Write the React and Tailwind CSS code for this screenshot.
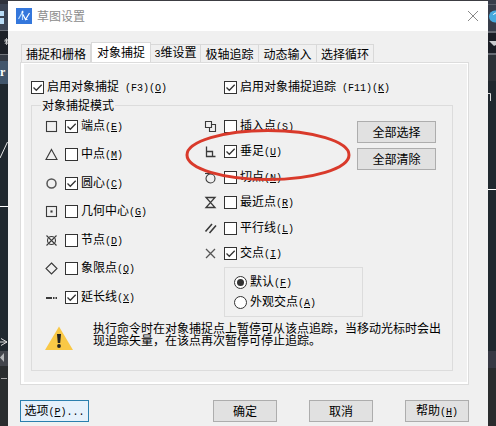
import React, { useState } from 'react';

const TABS = ['捕捉和栅格', '对象捕捉', '3维设置', '极轴追踪', '动态输入', '选择循环'];

const TAB_WIDTHS = ['w-[70px]', 'w-[60px]', 'w-[50px]', 'w-[58px]', 'w-[58px]', 'w-[57px]'];

const LEFT_MODES = [
  { id: 'end', name: '端点', hotkey: 'E', on: true },
  { id: 'mid', name: '中点', hotkey: 'M' },
  { id: 'center', name: '圆心', hotkey: 'C', on: true },
  { id: 'geo', name: '几何中心', hotkey: 'G' },
  { id: 'node', name: '节点', hotkey: 'D' },
  { id: 'quadrant', name: '象限点', hotkey: 'Q' },
  { id: 'extension', name: '延长线', hotkey: 'X', on: true },
];

const RIGHT_MODES = [
  { id: 'insert', name: '插入点', hotkey: 'S' },
  { id: 'perp', name: '垂足', hotkey: 'U', on: true },
  { id: 'tangent', name: '切点', hotkey: 'N' },
  { id: 'nearest', name: '最近点', hotkey: 'R' },
  { id: 'parallel', name: '平行线', hotkey: 'L' },
  { id: 'intersect', name: '交点', hotkey: 'I', on: true },
];

// 13x13 snap markers
const MARKERS = {
  end: <rect x="1.5" y="1.5" width="10" height="10" />,
  mid: <path d="M6.5 1.5 L12 11.5 H1 Z" />,
  center: <circle cx="6.5" cy="6.5" r="4.5" strokeWidth="1.5" stroke="#555" />,
  geo: (
    <>
      <rect x="1.5" y="1.5" width="10" height="10" />
      <rect x="6" y="6" width="1" height="1" />
    </>
  ),
  node: (
    <>
      <circle cx="6.5" cy="6.5" r="4" />
      <path d="M1.5 1.5 L11.5 11.5 M11.5 1.5 L1.5 11.5" />
    </>
  ),
  quadrant: <path d="M6.5 1 L12 6.5 L6.5 12 L1 6.5 Z" />,
  extension: <path d="M1 7 H7 M8 7 H9.5 M10.5 7 H12" strokeWidth="2" />,
  insert: <path d="M1.5 1.5 H7.5 V4.5 H11.5 V11.5 H5.5 V7.5 H1.5 Z M7.5 4.5 V7.5 H5.5" />,
  perp: <path d="M2.5 1.5 V11.5 H11.5 M2.5 6.5 H8.5 V11.5" strokeWidth="1.3" />,
  tangent: (
    <>
      <path d="M1 2.5 H12" />
      <circle cx="6.5" cy="7.5" r="4.5" />
    </>
  ),
  nearest: <path d="M2 1.5 H11 L2 11.5 H11 Z" strokeWidth="1.3" />,
  parallel: <path d="M1.5 9.5 L8 2 M5.5 11 L12 3.5" strokeWidth="1.6" />,
  intersect: <path d="M2 2 L11 11 M11 2 L2 11" strokeWidth="1.3" stroke="#555" />,
};

function Marker({ id }) {
  return (
    <svg className="size-[13px] shrink-0" viewBox="0 0 13 13" fill="none" stroke="#3a3a3a" strokeWidth="1.1" aria-hidden="true">
      {MARKERS[id]}
    </svg>
  );
}

// Latin part of a caption, half the width of the Chinese glyphs
function Half({ children }) {
  return <span className="font-['Liberation_Mono',monospace] text-[10px] whitespace-pre">{children}</span>;
}

function Hotkey({ char }) {
  return (
    <Half>
      (<u className="underline-offset-1">{char}</u>)
    </Half>
  );
}

function CheckBox({ checked, onChange, children }) {
  return (
    <label className="flex h-5 items-center gap-[3px] whitespace-nowrap">
      <span className="grid shrink-0">
        <input
          type="checkbox"
          checked={checked}
          onChange={onChange}
          className="peer col-start-1 row-start-1 size-[13px] appearance-none border border-[#333] bg-white"
        />
        <svg
          className="pointer-events-none invisible col-start-1 row-start-1 size-[13px] peer-checked:visible"
          viewBox="0 0 13 13"
          fill="none"
          stroke="#333"
          strokeWidth="1.3"
        >
          <path d="M2.5 6.5 L5.3 9.3 L10.7 3.7" />
        </svg>
      </span>
      <span>{children}</span>
    </label>
  );
}

function Radio({ checked, onChange, children }) {
  return (
    <label className="flex h-5 items-center gap-[3px] whitespace-nowrap">
      <input
        type="radio"
        name="intersection"
        checked={checked}
        onChange={onChange}
        className="grid size-[13px] shrink-0 appearance-none place-content-center rounded-full border border-[#333] bg-white before:size-[7px] before:rounded-full checked:before:bg-[#333]"
      />
      <span>{children}</span>
    </label>
  );
}

function Button({ className, children }) {
  return (
    <button
      type="button"
      className={`flex h-[22px] items-center justify-center border whitespace-nowrap ${className}`}
    >
      <span>{children}</span>
    </button>
  );
}

const GREY = 'border-[#adadad] bg-[#e1e1e1]';

function CanvasLeft() {
  return (
    <svg className="w-2 h-[426px] shrink-0" viewBox="0 0 8 426" aria-hidden="true">
      <rect width="8" height="30" fill="#3b4454" />
      <rect width="8" height="4" fill="#2f333d" />
      <path d="M0 11 H4 V16 H0 Z M0 18 H4 V24 H0 Z" fill="#b9dcf6" />
      <rect y="30" width="8" height="1" fill="#6a6f78" />
      <rect y="31" width="8" height="23" fill="#1c2027" />
      <path d="M4 41 H8 M6.5 38 V45 M5 39 L8 44 M5 44 L8 39" stroke="#ddd" strokeWidth="0.8" />
      <rect y="54" width="8" height="1" fill="#71757c" />
      <rect y="55" width="8" height="6" fill="#343a44" />
      <rect y="61" width="8" height="23" fill="#42566c" />
      <text x="0" y="76" fill="#fff" fontSize="12" fontWeight="bold" fontFamily="Liberation Serif, serif">r</text>
      <path d="M0 158 L7.5 142" stroke="#e5e5e5" />
      <path d="M0 206.5 H8" stroke="#fff" />
      <path d="M1 338.5 L7 342 L1 345.5 M0 342 H7" stroke="#ddd" fill="none" />
      <rect y="351" width="8" height="15" fill="#42454c" />
      <path d="M0 357.5 L4 353 V362 Z" fill="#b3b5b8" />
      <rect y="366" width="8" height="60" fill="#2a2d2f" />
      <path d="M1 378.5 H7" stroke="#aaa" />
    </svg>
  );
}

function CanvasRight() {
  return (
    <svg className="w-2 h-[426px] shrink-0" viewBox="0 0 8 426" aria-hidden="true">
      <rect width="8" height="31" fill="#383d4a" />
      <rect y="4" width="8" height="1" fill="#5b606b" />
      <circle cx="7" cy="16.5" r="6" fill="#47a9dd" />
      <path d="M5.5 15 Q6 13 8 13" stroke="#fff" fill="none" />
      <rect y="31" width="8" height="2" fill="#666a72" />
      <rect y="33" width="8" height="20" fill="#1b1e26" />
      <path d="M1 41 H8 V45 L6 46 Z" fill="#c9cbce" />
      <rect y="53" width="8" height="2" fill="#666a72" />
      <rect y="55" width="8" height="26" fill="#2c3137" />
      <path d="M0 93.5 H2.5 V101" stroke="#ddd" fill="none" />
      <path d="M0 189.5 H8" stroke="#fff" />
      <rect y="351" width="8" height="17" fill="#373944" />
      <rect y="368" width="8" height="58" fill="#2a2c2e" />
    </svg>
  );
}

export default function App() {
  const [tab, setTab] = useState(1);
  const [enabled, setEnabled] = useState(true);
  const [tracking, setTracking] = useState(true);
  const [intersection, setIntersection] = useState('default');
  const [modes, setModes] = useState(() =>
    Object.fromEntries([...LEFT_MODES, ...RIGHT_MODES].map(m => [m.id, !!m.on]))
  );

  const renderMode = m => (
    <div key={m.id} className="flex h-5 items-center gap-[7px]">
      <Marker id={m.id} />
      <CheckBox checked={modes[m.id]} onChange={() => setModes({ ...modes, [m.id]: !modes[m.id] })}>
        {m.name}
        <Hotkey char={m.hotkey} />
      </CheckBox>
    </div>
  );

  return (
    <div className="flex min-h-screen bg-[#20282f] font-['Noto_Sans_CJK_SC',sans-serif] text-[12px] leading-3 text-black">
      <CanvasLeft />

      <main className="min-w-0 flex-1 border-t border-[#3c3d42] bg-[#f0f0f0]">
        {/* Title bar */}
        <header className="flex h-[30px] items-center bg-white px-2">
          <svg className="size-4" viewBox="0 0 16 16" fill="none" aria-hidden="true">
            <rect width="16" height="16" fill="#3477dc" />
            <path d="M2.5 11 L6.5 4 V12" stroke="#b9dcff" strokeWidth="1.2" />
            <path d="M7 6.5 L9.5 11.5 L13.5 5 M9.5 11.5 H11.5" stroke="#fff" strokeWidth="1.2" />
            <circle cx="6.5" cy="4" r="1" fill="#fff" />
          </svg>
          <h1 className="ml-[5px] text-[#8c8c8c]">草图设置</h1>
          <button type="button" aria-label="关闭" className="ml-auto p-px">
            <svg className="size-3" viewBox="0 0 12 12" stroke="#888" strokeWidth="1">
              <path d="M1 1 L11 11 M11 1 L1 11" />
            </svg>
          </button>
        </header>

        <div className="pt-[11px] pr-[19px] pb-1 pl-3">
          {/* Tabs */}
          <div role="tablist" className="flex items-end pl-px">
            {TABS.map((name, i) => (
              <button
                key={name}
                type="button"
                role="tab"
                aria-selected={tab === i}
                onClick={() => setTab(i)}
                className={`flex items-center justify-center border-t border-[#d9d9d9] whitespace-nowrap ${TAB_WIDTHS[i]} ${
                  tab === i ? 'h-5 border-x bg-white pb-0.5' : 'h-[18px] border-r'
                } ${i === 0 ? 'border-l' : ''}`}
              >
                {name.startsWith('3') ? (
                  <span>
                    <Half>3</Half>
                    {name.slice(1)}
                  </span>
                ) : (
                  name
                )}
              </button>
            ))}
          </div>

          <section className="border border-[#dcdcdc]">
            <div className="border border-b-2 border-l-[3px] border-white pt-[13px] pr-[14px] pb-[11px] pl-[7px]">
              <div className="grid grid-cols-[193px_1fr]">
                <CheckBox checked={enabled} onChange={() => setEnabled(!enabled)}>
                  启用对象捕捉
                  <Half> (F3)</Half>
                  <Hotkey char="O" />
                </CheckBox>
                <CheckBox checked={tracking} onChange={() => setTracking(!tracking)}>
                  启用对象捕捉追踪
                  <Half> (F11)</Half>
                  <Hotkey char="K" />
                </CheckBox>
              </div>

              <fieldset className="mt-0.5 border border-[#dcdcdc] pb-5 pl-[13px]">
                <legend className="-ml-1 px-px">对象捕捉模式</legend>
                <div className="grid grid-cols-[159px_1fr] pt-[5px] pr-4">
                  <div className="flex h-[191px] flex-col justify-between">{LEFT_MODES.map(renderMode)}</div>

                  <div>
                    <div className="relative flex justify-between">
                      <div className="flex h-[148px] flex-col justify-between">{RIGHT_MODES.map(renderMode)}</div>
                      <div className="flex flex-col gap-[5px] pt-[5px]">
                        <Button className={`w-[79px] ${GREY}`}>全部选择</Button>
                        <Button className={`w-[79px] ${GREY}`}>全部清除</Button>
                      </div>
                      {/* Red pen mark around 垂足 */}
                      <svg
                        className="pointer-events-none absolute top-3 -left-5 h-[54px] w-[168px]"
                        viewBox="0 0 168 54"
                        fill="none"
                        stroke="#d93a2b"
                        strokeWidth="3"
                        aria-hidden="true"
                      >
                        <ellipse cx="84" cy="27" rx="81" ry="24.5" />
                      </svg>
                    </div>

                    <div className="mt-[3px] ml-5 w-[139px] border border-[#dcdcdc] py-1 pl-[9px]">
                      <Radio checked={intersection === 'default'} onChange={() => setIntersection('default')}>
                        默认
                        <Hotkey char="F" />
                      </Radio>
                      <Radio checked={intersection === 'apparent'} onChange={() => setIntersection('apparent')}>
                        外观交点
                        <Hotkey char="A" />
                      </Radio>
                    </div>
                  </div>
                </div>

                <div className="flex gap-5 pt-[5px]">
                  <svg className="mt-1 h-6 w-7 shrink-0" viewBox="0 0 28 24" aria-hidden="true">
                    <path d="M14 0.5 L28 24 H0 Z" fill="#f9c846" />
                    <path d="M12 8 H16 L15.2 17 H12.800 Z" fill="#222" />
                    <circle cx="14" cy="20" r="1.9" fill="#222" />
                  </svg>
                  <p className="max-w-[350px]">
                    执行命令时在对象捕捉点上暂停可从该点追踪，当移动光标时会出现追踪矢量，在该点再次暂停可停止追踪。
                  </p>
                </div>
              </fieldset>
            </div>
          </section>

          {/* Footer buttons */}
          <footer className="flex gap-8 pt-[15px]">
            <Button className="mr-auto w-[69px] border-[#2a7fae] bg-[#e5f1fb]">
              选项
              <Hotkey char="P" />
              <Half>...</Half>
            </Button>
            <Button className={`w-16 ${GREY}`}>确定</Button>
            <Button className={`w-16 ${GREY}`}>取消</Button>
            <Button className={`w-16 ${GREY}`}>
              帮助
              <Hotkey char="H" />
            </Button>
          </footer>
        </div>
      </main>

      <CanvasRight />
    </div>
  );
}
